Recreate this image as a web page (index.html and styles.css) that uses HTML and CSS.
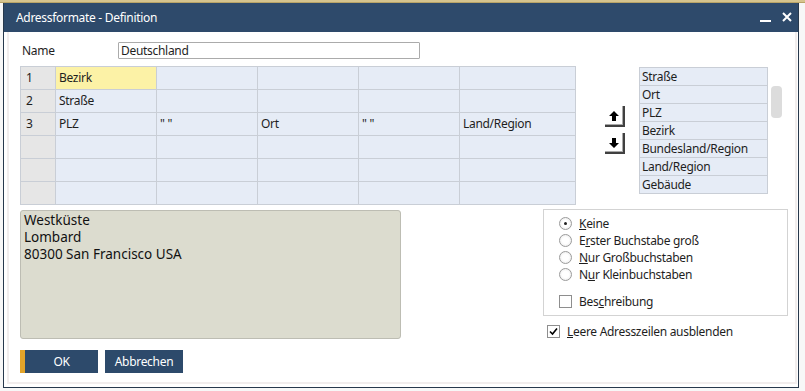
FILE: index.html
```html
<!DOCTYPE html>
<html lang="de">
<head>
<meta charset="utf-8">
<title>Adressformate - Definition</title>
<link rel="stylesheet" href="styles.css">
</head>
<body>
<div class="topstrip"></div>
<div class="dialog">
  <div class="titlebar">
    <span class="title">Adressformate - Definition</span>
    <span class="wbtn min"></span>
    <svg class="wbtn close" width="10" height="10" viewBox="0 0 10 10"><path d="M1 1L9 9M9 1L1 9" stroke="#fff" stroke-width="2"/></svg>
  </div>
  <div class="body">
    <div class="panel">
      <div class="namerow">
        <span class="namelabel">Name</span>
        <div class="nameinput">Deutschland</div>
      </div>
      <div class="gridrow">
        <div class="grid">
          <div class="c h">1</div><div class="c sel">Bezirk</div><div class="c"></div><div class="c"></div><div class="c"></div><div class="c"></div>
          <div class="c h">2</div><div class="c">Straße</div><div class="c"></div><div class="c"></div><div class="c"></div><div class="c"></div>
          <div class="c h">3</div><div class="c">PLZ</div><div class="c">" "</div><div class="c">Ort</div><div class="c">" "</div><div class="c">Land/Region</div>
          <div class="c h"></div><div class="c"></div><div class="c"></div><div class="c"></div><div class="c"></div><div class="c"></div>
          <div class="c h"></div><div class="c"></div><div class="c"></div><div class="c"></div><div class="c"></div><div class="c"></div>
          <div class="c h"></div><div class="c"></div><div class="c"></div><div class="c"></div><div class="c"></div><div class="c"></div>
        </div>
        <div class="arrows">
          <div class="abtn"><svg width="12" height="14" viewBox="0 0 12 14"><path d="M6 2L11 7H8V12H4V7H1Z" fill="#000"/></svg></div>
          <div class="abtn"><svg width="12" height="14" viewBox="0 0 12 14"><path d="M6 12L11 7H8V2H4V7H1Z" fill="#000"/></svg></div>
        </div>
        <div class="listbox">
          <div class="li">Straße</div>
          <div class="li">Ort</div>
          <div class="li">PLZ</div>
          <div class="li">Bezirk</div>
          <div class="li">Bundesland/Region</div>
          <div class="li">Land/Region</div>
          <div class="li">Gebäude</div>
        </div>
        <div class="thumb"></div>
      </div>
      <div class="lowerrow">
        <div class="preview">
          <div>Westküste</div>
          <div>Lombard</div>
          <div>80300 San Francisco USA</div>
        </div>
        <div class="optcol">
          <div class="group">
            <div class="opt"><span class="radio on"></span><span><u>K</u>eine</span></div>
            <div class="opt"><span class="radio"></span><span>E<u>r</u>ster Buchstabe groß</span></div>
            <div class="opt"><span class="radio"></span><span><u>N</u>ur Großbuchstaben</span></div>
            <div class="opt"><span class="radio"></span><span>N<u>u</u>r Kleinbuchstaben</span></div>
            <div class="opt chk"><span class="box"></span><span>Bes<u>c</u>hreibung</span></div>
          </div>
          <div class="opt leere"><span class="box"><svg width="11" height="11" viewBox="0 0 11 11"><path d="M2 5.5L4.5 8L9 2.5" fill="none" stroke="#000" stroke-width="1.6"/></svg></span><span><u>L</u>eere Adresszeilen ausblenden</span></div>
        </div>
      </div>
      <div class="btnrow">
        <div class="btn ok">OK</div>
        <div class="btn">Abbrechen</div>
      </div>
    </div>
  </div>
</div>
</body>
</html>
```
FILE: styles.css
```css
html, body {
  margin: 0;
  padding: 0;
}
body {
  width: 805px;
  height: 391px;
  overflow: hidden;
  background: #f7f7f7;
  font-family: "Noto Sans", "Open Sans", sans-serif;
  font-size: 12px;
  letter-spacing: -0.3px;
  color: #1e1e1e;
}
.topstrip {
  height: 2px;
  background: #d6c48e;
  border-bottom: 1px solid #b9a468;
}
.dialog {
  margin-left: 3px;
  width: 796px;
  height: 385px;
  box-sizing: border-box;
  border: 1px solid #27384c;
  border-top: none;
  background: #fff;
  display: flex;
  flex-direction: column;
}
.titlebar {
  height: 29px;
  flex: none;
  background: #2e4a6b;
  color: #fff;
  display: flex;
  align-items: center;
  padding-left: 12px;
}
.title {
  font-size: 12px;
  flex: 1;
}
.wbtn.min {
  width: 11px;
  height: 2px;
  background: #fff;
  margin-top: 6px;
  margin-right: 11px;
}
.wbtn.close {
  margin-right: 6px;
  margin-top: -2px;
}
.body {
  flex: 1;
  padding: 0 1px 3px 3px;
  display: flex;
}
.panel {
  flex: 1;
  border: 2px solid #f1eded;
  border-top: none;
  padding-left: 11px;
}
.namerow {
  display: flex;
  align-items: center;
  margin-top: 10px;
  height: 17px;
}
.namelabel {
  width: 96px;
  margin-left: 2px;
}
.nameinput {
  width: 302px;
  height: 17px;
  box-sizing: border-box;
  border: 1px solid #ababab;
  border-radius: 1px;
  padding-left: 2px;
  line-height: 15px;
}
.gridrow {
  display: flex;
  align-items: flex-start;
  margin-top: 7px;
}
.grid {
  display: grid;
  grid-template-columns: 35px 101px 101px 101px 101px 116px;
  grid-auto-rows: 23px;
  border-top: 1px solid #c9ced6;
  border-left: 1px solid #c9ced6;
  background: #e6ecf6;
}
.c {
  border-right: 1px solid #c9ced6;
  border-bottom: 1px solid #c9ced6;
  padding-left: 3px;
  line-height: 22px;
  white-space: nowrap;
  overflow: hidden;
}
.c.h {
  background: #e6e6e6;
  padding-left: 5px;
}
.c.sel {
  background: #fcf2a6;
}
.arrows {
  display: flex;
  flex-direction: column;
  gap: 6px;
  margin-left: 29px;
  margin-top: 40px;
}
.abtn {
  width: 20px;
  height: 21px;
  box-sizing: border-box;
  background: #fff;
  border-right: 2px solid #404040;
  border-bottom: 2px solid #404040;
  box-shadow: inset -1px -1px 0 #a8a8a8;
  display: flex;
  align-items: center;
  justify-content: center;
}
.listbox {
  margin-left: 14px;
  margin-top: 1px;
  width: 129px;
  box-sizing: border-box;
  border: 1px solid #c9ced6;
  background: #e6ecf6;
}
.li {
  height: 18px;
  box-sizing: border-box;
  border-bottom: 1px solid #c9ced6;
  line-height: 17px;
  padding-left: 2px;
}
.li:last-child {
  border-bottom: none;
  height: 17px;
}
.thumb {
  margin-left: 3px;
  margin-top: 20px;
  width: 11px;
  height: 32px;
  border-radius: 4px;
  background: #dcdcdc;
}
.lowerrow {
  display: flex;
  align-items: flex-start;
  margin-top: 4px;
  height: 130px;
}
.preview {
  margin-top: 1px;
  width: 381px;
  height: 129px;
  box-sizing: border-box;
  border: 1px solid #bdbdb3;
  border-radius: 3px;
  background: #dcdccf;
  padding: 1px 0 0 3px;
  font-size: 13.5px;
  letter-spacing: 0;
  line-height: 17px;
  color: #111;
}
.optcol {
  margin-left: 142px;
  display: flex;
  flex-direction: column;
}
.group {
  width: 245px;
  height: 107px;
  box-sizing: border-box;
  border: 1px solid #d3d3d3;
  padding: 5px 0 0 15px;
}
.opt {
  display: flex;
  align-items: center;
  height: 17px;
  gap: 7px;
}
.radio {
  width: 13px;
  height: 13px;
  box-sizing: border-box;
  border-radius: 50%;
  border: 1px solid #9b9b9b;
  background: radial-gradient(circle, #ffffff 40%, #e4e4e4 100%);
  display: flex;
  align-items: center;
  justify-content: center;
}
.radio.on::after {
  content: "";
  width: 3px;
  height: 3px;
  border-radius: 50%;
  background: #222;
}
.box {
  width: 13px;
  height: 13px;
  box-sizing: border-box;
  border: 1px solid #8e8e8e;
  background: #fff;
  display: flex;
  align-items: center;
  justify-content: center;
}
.opt.chk {
  margin-top: 10px;
}
.opt.leere {
  margin-top: 7px;
  margin-left: 4px;
}
.btnrow {
  display: flex;
  gap: 7px;
  margin-top: 11px;
}
.btn {
  width: 78px;
  height: 23px;
  box-sizing: border-box;
  background: #2d4a6b;
  color: #fff;
  display: flex;
  align-items: center;
  justify-content: center;
}
.btn.ok {
  border-left: 5px solid #e2a42a;
}
```
